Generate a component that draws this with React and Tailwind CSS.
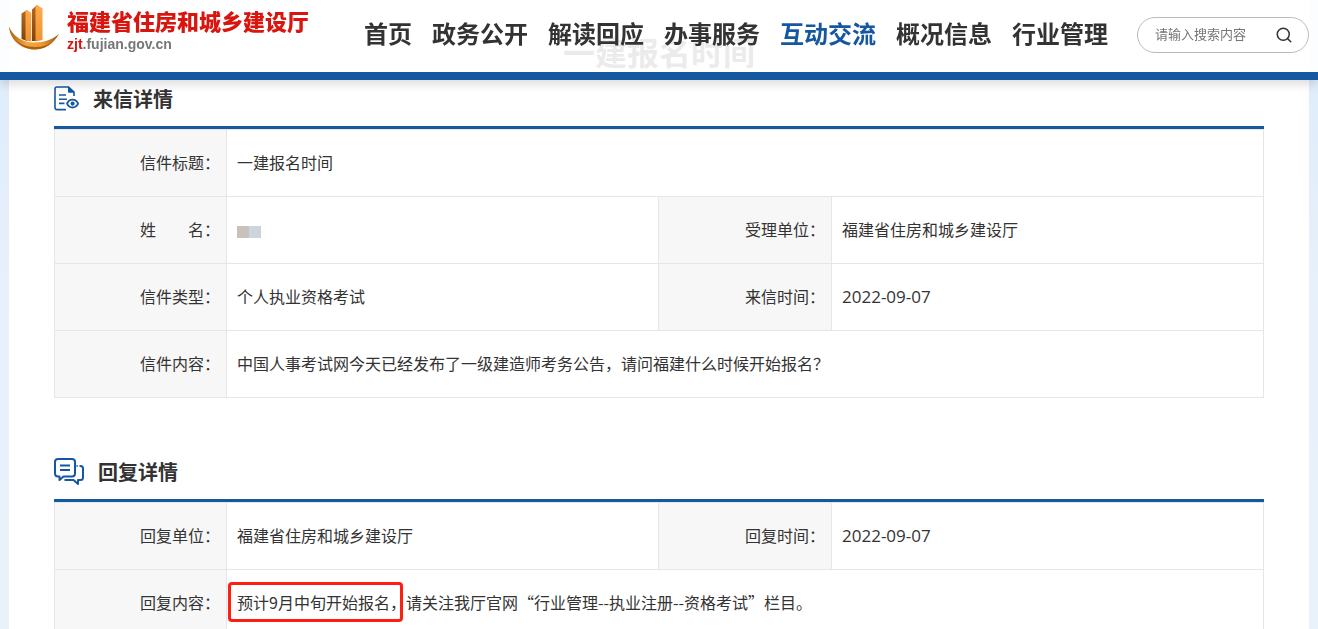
// src/App.jsx
import { Search } from "lucide-react";

const NAV = ["首页", "政务公开", "解读回应", "办事服务", "互动交流", "概况信息", "行业管理"];

function Logo() {
  return (
    <svg width="50" height="46" viewBox="0 0 50 46" aria-hidden="true">
      <defs>
        <linearGradient id="face" x1="0" x2="0" y1="0" y2="1">
          <stop offset="0" stopColor="#ffac4a" />
          <stop offset="1" stopColor="#ef9331" />
        </linearGradient>
        <linearGradient id="side" x1="0" x2="0" y1="0" y2="1">
          <stop offset="0" stopColor="#b46a20" />
          <stop offset="1" stopColor="#7d430d" />
        </linearGradient>
        <linearGradient id="hull" x1="0" x2="1" y1="0" y2="0">
          <stop offset="0" stopColor="#a8610f" />
          <stop offset="0.35" stopColor="#f5a63f" />
          <stop offset="0.65" stopColor="#f09a35" />
          <stop offset="1" stopColor="#9a550f" />
        </linearGradient>
      </defs>
      {/* left tower */}
      <path d="M12.500 9.500 18 6v31l-5.500-2z" fill="url(#side)" />
      <path d="M16.500 7 18 6l4.300 3v28.500l-5.800-1z" fill="url(#face)" />
      {/* right tower */}
      <path d="M23 5.500 28 1v36h-5z" fill="url(#side)" />
      <path d="M26.500 2.500 28.300 1 33.500 4.500V36l-7 1.500z" fill="url(#face)" />
      {/* boat */}
      <path d="M0 22.500C4 32 13 38.500 25 38.500c10.500 0 19-3 25-8.700C45 39.500 36 45.500 25.500 45.500 12 45.500 1 36 0 22.500z" fill="url(#hull)" />
      <path d="M4 33c5 7.500 12.500 12.500 21.500 12.500 7.500 0 14-3 18.500-7.500-5 3.500-11 5-18 5C16.500 43 9 39.500 4 33z" fill="#a8610f" />
    </svg>
  );
}

function LetterIcon() {
  return (
    <svg width="25" height="25" viewBox="0 0 25 25" fill="none" stroke="#1658a0" strokeWidth="1.6" aria-hidden="true">
      <path d="M12 23.600H3a2 2 0 0 1-2-2V3a2 2 0 0 1 2-2h11.500l5.500 5.200V10" />
      <path d="M14.500 1v5.200H20z" fill="#1658a0" strokeWidth="1" />
      <path d="M5 9h7M5 13.200h8M5 17.400h5.500" />
      <path d="M13 17.600c2.600-5.200 8.400-5.200 11.200 0-2.800 5.200-8.600 5.200-11.200 0z" strokeWidth="1.800" />
      <circle cx="18.600" cy="17.600" r="1.300" fill="#1658a0" />
    </svg>
  );
}

function ReplyIcon() {
  return (
    <svg width="30" height="28" viewBox="0 0 30 28" fill="none" stroke="#1658a0" strokeWidth="2" strokeLinejoin="round" aria-hidden="true">
      <path d="M4 1h14a3 3 0 0 1 3 3v11.500a3 3 0 0 1-3 3H9.500L5.500 22v-3.500H4a3 3 0 0 1-3-3V4a3 3 0 0 1 3-3z" />
      <path d="M6 7.500h10M6 12h10" />
      <path d="M25.500 8h1A2.500 2.500 0 0 1 29 10.500v9a2.500 2.500 0 0 1-2.500 2.500H24v4l-4.500-4H10.500" />
      <path d="M22.500 8h1.200" />
    </svg>
  );
}

function Section({ icon, title, children }) {
  return (
    <section>
      <div className="flex h-[54px] items-center gap-3.5 border-b-3 border-[#1658a0] pb-1">
        {icon}
        <h2 className="text-xl leading-8 font-bold text-[#333]">{title}</h2>
      </div>
      <table className="w-full table-fixed border-collapse text-base leading-6 text-[#333]">
        <colgroup>
          <col className="w-[172px]" />
          <col />
          <col className="w-[173px]" />
          <col />
        </colgroup>
        <tbody>{children}</tbody>
      </table>
    </section>
  );
}

function Label({ children }) {
  return (
    <th scope="row" className="border border-[#e6e6e6] bg-[#f7f7f7] pr-1.5 pb-0.5 text-right font-normal">
      {children}：
    </th>
  );
}

function Value({ wide, children }) {
  return (
    <td colSpan={wide ? 3 : 1} className="border border-[#e6e6e6] bg-white pb-0.5 pl-2.5">
      {children}
    </td>
  );
}

function DateText({ children }) {
  return <time className="font-['Open_Sans',sans-serif] text-[17px]">{children}</time>;
}

export default function App() {
  return (
    <div
      lang="zh-CN"
      className="h-screen overflow-hidden bg-linear-to-b from-[#dcebfa] via-[#e8f1fb] to-[#e9f1fb] font-['Noto_Sans_CJK_SC',sans-serif]"
    >
      {/* Fixed header, content shows faintly through it */}
      <header className="fixed inset-x-0 top-0 z-10 flex h-20 items-start justify-between border-b-8 border-[#1658a0] bg-white/90 px-[9px] shadow-[0_4px_10px_rgba(0,0,0,0.15)]">
        <a href="#" className="flex items-start gap-2 pt-1">
          <Logo />
          <span className="flex flex-col pt-0.5 whitespace-nowrap">
            <span className="text-[22px] leading-7 font-black text-[#d8150f]">福建省住房和城乡建设厅</span>
            <span className="font-['Liberation_Sans',sans-serif] text-sm leading-5 font-bold text-[#777]">
              <span className="text-[#d8150f]">zjt</span>.fujian.gov.cn
            </span>
          </span>
        </a>
        <div className="flex items-center gap-[29px] pt-[17px]">
          <nav className="flex gap-5 pb-1 text-2xl leading-8 font-bold whitespace-nowrap text-[#333]">
            {NAV.map((item) => (
              <a key={item} href="#" className={item === "互动交流" ? "text-[#1658a0]" : ""}>
                {item}
              </a>
            ))}
          </nav>
          <form className="flex h-9 w-[172px] items-center rounded-full border border-[#bbb] bg-white pr-[15px] pl-[17px]">
            <input
              type="text"
              aria-label="搜索"
              placeholder="请输入搜索内容"
              className="min-w-0 flex-1 pb-0.5 text-[13px] outline-none placeholder:text-[#757575]"
            />
            <button type="button" aria-label="提交搜索" className="text-[#333]">
              <Search size={18} strokeWidth={2} />
            </button>
          </form>
        </div>
      </header>

      <main className="mx-[9px] bg-white px-[45px] pt-[27px]">
        <h1 className="text-center text-[32px] leading-12 font-bold text-[#333]">一建报名时间</h1>

        <div className="flex flex-col gap-[50px]">
          <Section icon={<LetterIcon />} title="来信详情">
            <tr className="h-[67px]">
              <Label>信件标题</Label>
              <Value wide>一建报名时间</Value>
            </tr>
            <tr className="h-[67px]">
              <Label>姓　　名</Label>
              <Value>
                <span className="flex pt-1.5">
                  <span className="size-3 bg-[#c9c2ba]" />
                  <span className="size-3 bg-[#ccd4de]" />
                </span>
              </Value>
              <Label>受理单位</Label>
              <Value>福建省住房和城乡建设厅</Value>
            </tr>
            <tr className="h-[67px]">
              <Label>信件类型</Label>
              <Value>个人执业资格考试</Value>
              <Label>来信时间</Label>
              <Value>
                <DateText>2022-09-07</DateText>
              </Value>
            </tr>
            <tr className="h-[67px]">
              <Label>信件内容</Label>
              <Value wide>中国人事考试网今天已经发布了一级建造师考务公告，请问福建什么时候开始报名？</Value>
            </tr>
          </Section>

          <Section icon={<ReplyIcon />} title="回复详情">
            <tr className="h-[67px]">
              <Label>回复单位</Label>
              <Value>福建省住房和城乡建设厅</Value>
              <Label>回复时间</Label>
              <Value>
                <DateText>2022-09-07</DateText>
              </Value>
            </tr>
            <tr className="h-[67px]">
              <Label>回复内容</Label>
              <Value wide>
                <span className="relative inline-block">
                  预计9月中旬开始报名，
                  <span className="absolute -inset-y-2 right-[3px] -left-[9px] rounded-sm border-3 border-[#ff1e12]" />
                </span>
                请关注我厅官网“行业管理--执业注册--资格考试”栏目。
              </Value>
            </tr>
          </Section>
        </div>
      </main>
    </div>
  );
}
